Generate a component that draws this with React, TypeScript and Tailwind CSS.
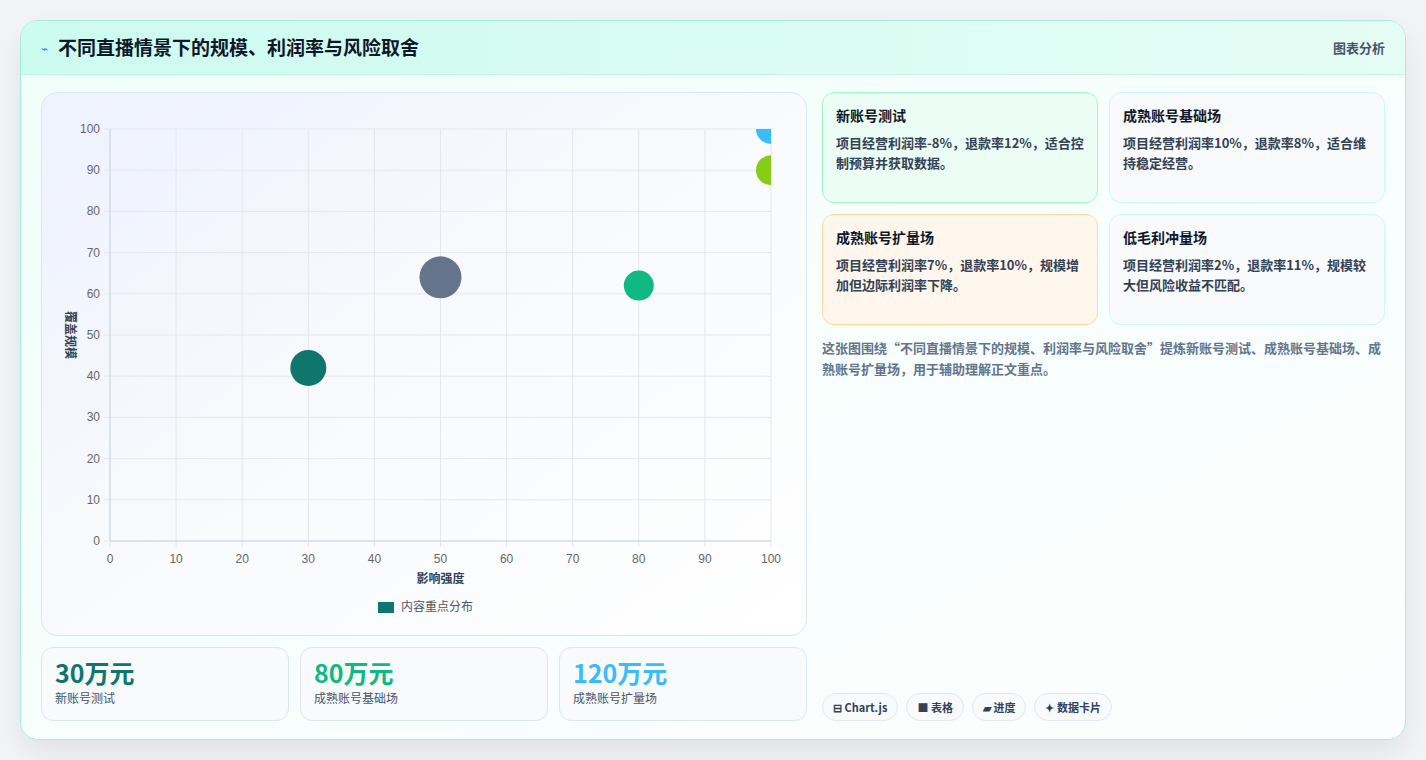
const font = { fontFamily: '"Noto Sans CJK SC", "Noto Sans", sans-serif' };

const cards = [
  { title: "新账号测试", body: "项目经营利润率-8%，退款率12%，适合控制预算并获取数据。", cls: "border-[#a7f3d0] bg-[#ecfdf5]" },
  { title: "成熟账号基础场", body: "项目经营利润率10%，退款率8%，适合维持稳定经营。", cls: "border-[#ccfbf1] bg-[#f8fafc]" },
  { title: "成熟账号扩量场", body: "项目经营利润率7%，退款率10%，规模增加但边际利润率下降。", cls: "border-[#fcd9a0] bg-[#fff7ed]" },
  { title: "低毛利冲量场", body: "项目经营利润率2%，退款率11%，规模较大但风险收益不匹配。", cls: "border-[#ccfbf1] bg-[#f8fafc]" },
];

const stats = [
  { v: "30万元", l: "新账号测试", c: "text-[#0f766e]" },
  { v: "80万元", l: "成熟账号基础场", c: "text-[#10b981]" },
  { v: "120万元", l: "成熟账号扩量场", c: "text-[#38bdf8]" },
];

function Chart() {
  const L = 68, T = 36, W = 661, H = 412;
  const px = (x: number) => L + (x / 100) * W;
  const py = (y: number) => T + H - (y / 100) * H;
  const ticks = [0, 10, 20, 30, 40, 50, 60, 70, 80, 90, 100];
  const pts = [
    { x: 30, y: 42, r: 18, c: "#0f766e" },
    { x: 50, y: 64, r: 21, c: "#64748b" },
    { x: 80, y: 62, r: 15, c: "#10b981" },
    { x: 100, y: 100, r: 15, c: "#38bdf8" },
    { x: 100, y: 90, r: 15, c: "#84cc16" },
  ];
  return (
    <svg width="766" height="543" className="block">
      <defs>
        <clipPath id="plot"><rect x={L} y={T} width={W} height={H} /></clipPath>
      </defs>
      {ticks.map((t) => (
        <g key={t}>
          <line x1={px(t)} x2={px(t)} y1={T} y2={T + H + 6} stroke="#e5e7eb" />
          <line x1={L - 6} x2={L + W} y1={py(t)} y2={py(t)} stroke="#e5e7eb" />
          <text x={px(t)} y={T + H + 22} fontSize="12" fill="#666" textAnchor="middle" fontFamily="Liberation Sans, sans-serif">{t}</text>
          <text x={L - 10} y={py(t) + 4} fontSize="12" fill="#666" textAnchor="end" fontFamily="Liberation Sans, sans-serif">{t}</text>
        </g>
      ))}
      <line x1={L} x2={L} y1={T} y2={T + H} stroke="#cbd5e1" />
      <line x1={L} x2={L + W} y1={T + H} y2={T + H} stroke="#cbd5e1" />
      <g clipPath="url(#plot)">
        {pts.map((p, i) => <circle key={i} cx={px(p.x)} cy={py(p.y)} r={p.r} fill={p.c} />)}
      </g>
      <text x={L + W / 2} y={T + H + 42} fontSize="12" fill="#334155" textAnchor="middle" fontWeight="700" style={font}>影响强度</text>
      <text x={0} y={0} fontSize="12" fill="#334155" textAnchor="middle" fontWeight="700" style={font} transform={`translate(24 ${T + H / 2}) rotate(90)`}>覆盖规模</text>
      <rect x={336} y={509} width={16} height={11} fill="#0f766e" />
      <text x={359} y={518} fontSize="12" fill="#555" style={font}>内容重点分布</text>
    </svg>
  );
}

export default function App() {
  return (
    <div className="min-h-screen bg-[#f3f4f6] p-5" style={font}>
      <div className="h-[720px] rounded-[18px] border border-[#a5ede0] bg-gradient-to-br from-[#f0fdf9] via-[#f7fffd] to-[#fbfefe] shadow-[0_12px_30px_rgba(0,0,0,0.08)] overflow-hidden flex flex-col">
        <div className="h-[55px] flex items-center justify-between px-5 bg-gradient-to-r from-[#ccfbef] to-[#e5fdf5] border-b border-[#c6f3e6]">
          <div className="flex items-center gap-2.5">
            <span className="text-[#3b82f6] text-xs">⌁</span>
            <h1 className="text-[19px] font-bold text-[#0f172a]">不同直播情景下的规模、利润率与风险取舍</h1>
          </div>
          <span className="text-[13px] font-semibold text-[#475569]">图表分析</span>
        </div>
        <div className="flex-1 flex gap-[15px] px-5 pt-[17px] pb-[18px]">
          <div className="w-[766px] flex flex-col gap-[11px]">
            <div className="h-[544px] rounded-2xl border border-[#dbe7ef] bg-gradient-to-br from-[#eef2ff] via-[#f8fafc] to-white overflow-hidden">
              <Chart />
            </div>
            <div className="flex gap-[11px]">
              {stats.map((s) => (
                <div key={s.l} className="flex-1 h-[74px] rounded-xl border border-[#dbe7ef] bg-[#f8fafc] px-[13px] pt-2">
                  <div className={`text-[25px] font-bold leading-8 ${s.c}`}>{s.v}</div>
                  <div className="text-xs text-[#475569] mt-0.5">{s.l}</div>
                </div>
              ))}
            </div>
          </div>
          <div className="flex-1 flex flex-col">
            <div className="grid grid-cols-2 gap-[11px]">
              {cards.map((c) => (
                <div key={c.title} className={`h-[111px] rounded-xl border px-[13px] pt-3 ${c.cls}`}>
                  <div className="text-sm font-bold text-[#0f172a]">{c.title}</div>
                  <p className="mt-2 text-[13px] font-semibold leading-5 text-[#334155]">{c.body}</p>
                </div>
              ))}
            </div>
            <p className="mt-3 text-[13px] font-semibold leading-[21px] text-[#64748b]">这张图围绕“不同直播情景下的规模、利润率与风险取舍”提炼新账号测试、成熟账号基础场、成熟账号扩量场，用于辅助理解正文重点。</p>
            <div className="mt-auto flex gap-2">
              {["⊟ Chart.js", "■ 表格", "▰ 进度", "✦ 数据卡片"].map((t) => (
                <span key={t} className="h-7 px-2.5 flex items-center rounded-full border border-[#e2e8f0] bg-[#f8fafc] text-[11px] font-bold text-[#334155]">{t}</span>
              ))}
            </div>
          </div>
        </div>
      </div>
    </div>
  );
}
